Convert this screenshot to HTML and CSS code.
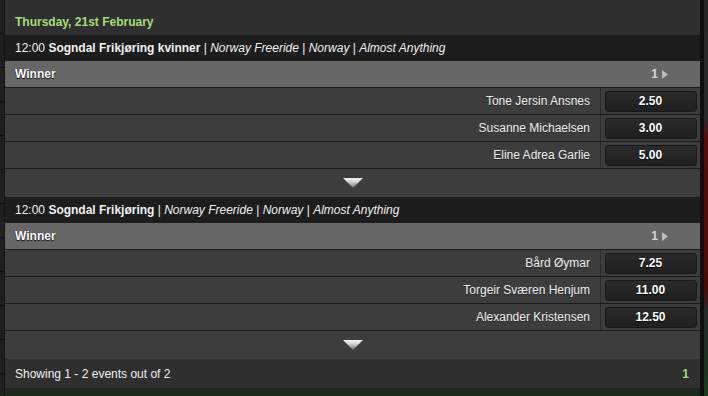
FILE: index.html
```html
<!DOCTYPE html>
<html lang="en">
<head>
    <meta charset="UTF-8">
    <meta name="viewport" content="width=device-width, initial-scale=1.0">
    <title>Coupon</title>
    <link rel="stylesheet" href="styles.css">
</head>
<body>

<div class="page">
    <div class="side-left"></div>

    <div class="coupon">
        <div class="date-head">Thursday, 21st February</div>

        <div class="event">
            <div class="event-head">12:00 <b>Sogndal Frikjøring kvinner</b> | <i>Norway Freeride</i> | <i>Norway</i> | <i>Almost Anything</i></div>
            <div class="market-head">
                <span class="market-name">Winner</span>
                <span class="market-count">1 <svg width="6" height="9" viewBox="0 0 6 9"><polygon points="0,0 6,4.5 0,9" fill="#bdbdbd"/></svg></span>
            </div>
            <div class="selection">
                <div class="sel-name">Tone Jersin Ansnes</div>
                <div class="sel-odds"><span class="odds-btn">2.50</span></div>
            </div>
            <div class="selection">
                <div class="sel-name">Susanne Michaelsen</div>
                <div class="sel-odds"><span class="odds-btn">3.00</span></div>
            </div>
            <div class="selection">
                <div class="sel-name">Eline Adrea Garlie</div>
                <div class="sel-odds"><span class="odds-btn">5.00</span></div>
            </div>
            <div class="expand">
                <svg width="20" height="10" viewBox="0 0 20 10">
                    <defs>
                        <linearGradient id="arrowFill1" x1="0" y1="0" x2="0" y2="1">
                            <stop offset="0" stop-color="#f2f2f2"/>
                            <stop offset="0.35" stop-color="#d8d8d8"/>
                            <stop offset="1" stop-color="#6a6a6a"/>
                        </linearGradient>
                    </defs>
                    <polygon points="0,0 20,0 10,10" fill="url(#arrowFill1)"/>
                </svg>
            </div>
        </div>

        <div class="event">
            <div class="event-head">12:00 <b>Sogndal Frikjøring</b> | <i>Norway Freeride</i> | <i>Norway</i> | <i>Almost Anything</i></div>
            <div class="market-head">
                <span class="market-name">Winner</span>
                <span class="market-count">1 <svg width="6" height="9" viewBox="0 0 6 9"><polygon points="0,0 6,4.5 0,9" fill="#bdbdbd"/></svg></span>
            </div>
            <div class="selection">
                <div class="sel-name">Bård Øymar</div>
                <div class="sel-odds"><span class="odds-btn">7.25</span></div>
            </div>
            <div class="selection">
                <div class="sel-name">Torgeir Sværen Henjum</div>
                <div class="sel-odds"><span class="odds-btn">11.00</span></div>
            </div>
            <div class="selection">
                <div class="sel-name">Alexander Kristensen</div>
                <div class="sel-odds"><span class="odds-btn">12.50</span></div>
            </div>
            <div class="expand">
                <svg width="20" height="10" viewBox="0 0 20 10">
                    <defs>
                        <linearGradient id="arrowFill2" x1="0" y1="0" x2="0" y2="1">
                            <stop offset="0" stop-color="#f2f2f2"/>
                            <stop offset="0.35" stop-color="#d8d8d8"/>
                            <stop offset="1" stop-color="#6a6a6a"/>
                        </linearGradient>
                    </defs>
                    <polygon points="0,0 20,0 10,10" fill="url(#arrowFill2)"/>
                </svg>
            </div>
        </div>

        <div class="footer">
            <span>Showing 1 - 2 events out of 2</span>
            <span class="page-num">1</span>
        </div>
    </div>

    <div class="side-right">
        <div class="side-edge"></div>
        <div class="side-photo"></div>
    </div>
</div>

</body>
</html>
```

FILE: styles.css
```css
body {
    margin: 0;
    font-family: "Liberation Sans", Arial, sans-serif;
    font-size: 12px;
    color: #f0f0f0;
    background-color: #1a221a;
}
.page {
    display: flex;
    width: 708px;
    height: 396px;
    overflow: hidden;
    background: linear-gradient(#1e1e1e 0, #1c1f1c 80%, #1b2a1b 100%);
}
.side-left {
    width: 4px;
    flex-shrink: 0;
    background-color: #1f1f1f;
    background-image: repeating-linear-gradient(to bottom, transparent 0, transparent 33px, #111 33px, #111 34px);
    border-right: 1px solid #151515;
}
.coupon {
    width: 695px;
    flex-shrink: 0;
    align-self: flex-start;
}
.date-head {
    height: 35px;
    box-sizing: border-box;
    padding: 15px 10px 0;
    line-height: 14px;
    background-color: #2f2f2f;
    color: #a3dc7c;
    font-weight: bold;
}
.event-head {
    height: 26px;
    line-height: 26px;
    padding: 0 10px;
    background-color: #1d1d1d;
    white-space: nowrap;
}
.market-head {
    display: flex;
    justify-content: space-between;
    align-items: center;
    height: 26px;
    padding: 0 32px 0 10px;
    background-color: #676767;
    border-bottom: 1px solid #1a1a1a;
}
.market-name {
    font-weight: bold;
    color: #fff;
    text-shadow: 0 1px 1px #111, 0 0 1px #222;
}
.market-count {
    display: flex;
    align-items: center;
    gap: 4px;
    color: #d6d6d6;
    font-weight: bold;
}
.selection {
    display: flex;
    height: 26px;
    background-color: #3d3d3d;
    border-bottom: 1px solid #1a1a1a;
}
.sel-name {
    flex: 1;
    line-height: 26px;
    text-align: right;
    padding-right: 10px;
    border-right: 1px solid #2c2c2c;
    color: #eee;
    text-shadow: 0 1px 0 #2a2a2a;
}
.sel-odds {
    width: 99px;
    display: flex;
    align-items: center;
    justify-content: center;
}
.odds-btn {
    width: 90px;
    height: 19px;
    line-height: 18px;
    text-align: center;
    font-weight: bold;
    color: #fff;
    background: linear-gradient(#2b2b2b, #1f1f1f);
    border: 1px solid #191919;
    border-radius: 3px;
    text-shadow: 0 1px 1px #000;
}
.expand {
    height: 28px;
    display: flex;
    justify-content: center;
    align-items: center;
    background-color: #3d3d3d;
}
.footer {
    display: flex;
    justify-content: space-between;
    align-items: center;
    height: 29px;
    padding: 0 11px 0 10px;
    background-color: #2f2f2f;
}
.page-num {
    color: #a3dc7c;
    font-weight: bold;
}
.side-right {
    flex: 1;
    display: flex;
}
.side-edge {
    width: 4px;
    background-color: #0f0f0f;
}
.side-photo {
    flex: 1;
    background: linear-gradient(#262626 0, #2a2a2a 120px, #5a0c0c 135px, #4a0a0a 290px, #262a2a 310px, #1f2f22 350px, #1d3a1d 396px);
}
```
